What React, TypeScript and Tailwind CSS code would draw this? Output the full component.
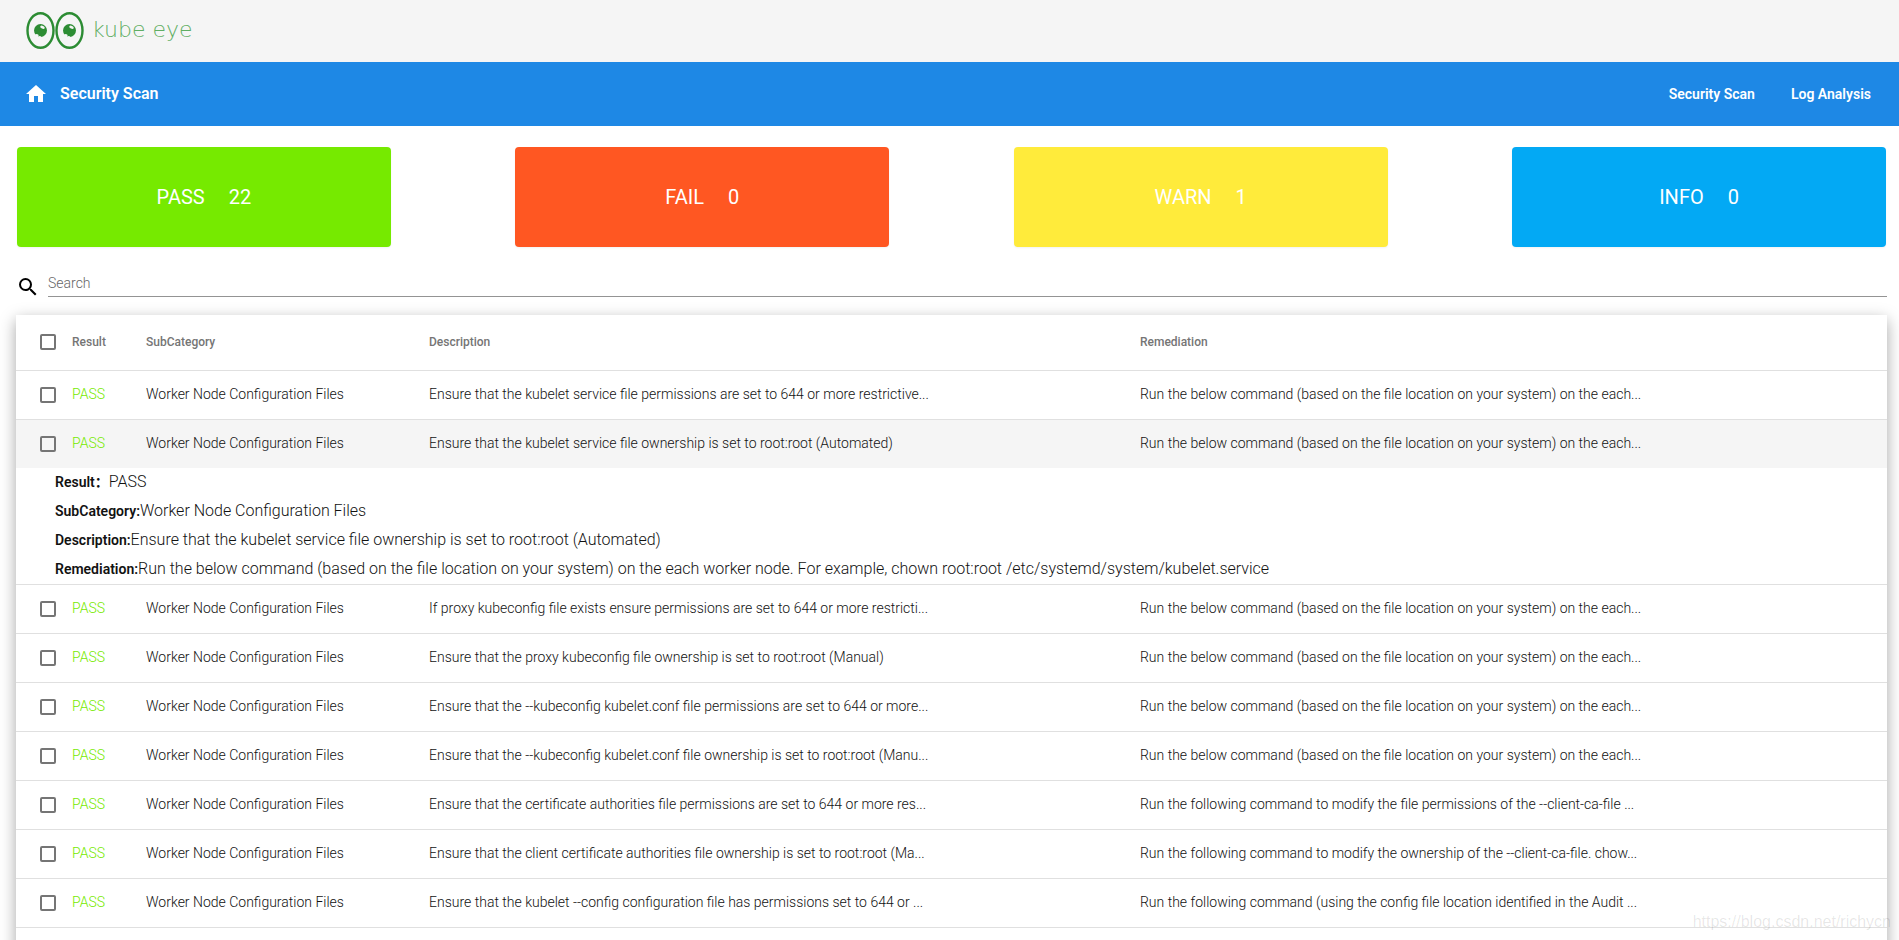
import { useState } from 'react'
import { MdHome, MdSearch } from 'react-icons/md'

type Item = {
  description: string
  remediation: string
  full?: { description: string; remediation: string }
}

const CATEGORY = 'Worker Node Configuration Files'
const BELOW = 'Run the below command (based on the file location on your system) on the each...'

const items: Item[] = [
  { description: 'Ensure that the kubelet service file permissions are set to 644 or more restrictive...', remediation: BELOW },
  {
    description: 'Ensure that the kubelet service file ownership is set to root:root (Automated)',
    remediation: BELOW,
    full: {
      description: 'Ensure that the kubelet service file ownership is set to root:root (Automated)',
      remediation:
        'Run the below command (based on the file location on your system) on the each worker node. For example, chown root:root /etc/systemd/system/kubelet.service',
    },
  },
  { description: 'If proxy kubeconfig file exists ensure permissions are set to 644 or more restricti...', remediation: BELOW },
  { description: 'Ensure that the proxy kubeconfig file ownership is set to root:root (Manual)', remediation: BELOW },
  { description: 'Ensure that the --kubeconfig kubelet.conf file permissions are set to 644 or more...', remediation: BELOW },
  { description: 'Ensure that the --kubeconfig kubelet.conf file ownership is set to root:root (Manu...', remediation: BELOW },
  {
    description: 'Ensure that the certificate authorities file permissions are set to 644 or more res...',
    remediation: 'Run the following command to modify the file permissions of the --client-ca-file ...',
  },
  {
    description: 'Ensure that the client certificate authorities file ownership is set to root:root (Ma...',
    remediation: 'Run the following command to modify the ownership of the --client-ca-file. chow...',
  },
  {
    description: 'Ensure that the kubelet --config configuration file has permissions set to 644 or ...',
    remediation: 'Run the following command (using the config file location identified in the Audit ...',
  },
]

const cards = [
  { label: 'PASS', count: 22, color: 'bg-[#76ea00]' },
  { label: 'FAIL', count: 0, color: 'bg-[#ff5722]' },
  { label: 'WARN', count: 1, color: 'bg-[#ffeb3b]' },
  { label: 'INFO', count: 0, color: 'bg-[#03a9f4]' },
]

const Eye = ({ x }: { x: number }) => (
  <g transform={`translate(${x} 0)`}>
    <ellipse cx="14" cy="18.5" rx="13" ry="17.3" fill="none" stroke="#2c8c33" strokeWidth="2.4" />
    <circle cx="14" cy="18.5" r="6.5" fill="#2c8c33" />
    <ellipse cx="16" cy="15.3" rx="2.4" ry="1.4" fill="#f5f5f5" transform="rotate(25 16 15.3)" />
    <circle cx="10.2" cy="24" r="2" fill="#f5f5f5" />
    <circle cx="13.4" cy="25.2" r="1.2" fill="#f5f5f5" />
  </g>
)

const Logo = () => (
  <a href="#" className="flex items-center gap-2">
    <svg width="58" height="38" viewBox="0 0 58 38" aria-hidden="true">
      <Eye x={0.5} />
      <Eye x={29.5} />
    </svg>
    <span className="pb-1 font-['DejaVu_Sans',sans-serif] text-[22px] font-extralight text-[#5fae63]">kube eye</span>
  </a>
)

const Checkbox = ({ label }: { label: string }) => (
  <input
    type="checkbox"
    aria-label={label}
    className="block size-4 appearance-none rounded-xs border-2 border-[#757575] checked:bg-[#1e88e5]"
  />
)

const Detail = ({ item }: { item: Item }) => (
  <div className="-mt-px pb-px pl-[39px] text-base leading-[29px] font-light">
    <p><b className="text-sm font-semibold">Result：</b>PASS</p>
    <p><b className="text-sm font-semibold">SubCategory:</b>{CATEGORY}</p>
    <p><b className="text-sm font-semibold">Description:</b>{item.full?.description}</p>
    <p><b className="text-sm font-semibold">Remediation:</b>{item.full?.remediation}</p>
  </div>
)

const Row = ({ item }: { item: Item }) => (
  <>
    <tr className={item.full ? 'h-[49px] bg-[#f5f5f5]' : 'h-[49px] border-b border-[#e0e0e0]'}>
      <td className="pl-6"><Checkbox label={item.description} /></td>
      <td className="pb-0.5 text-[#76ea00]">PASS</td>
      <td className="pb-0.5">{CATEGORY}</td>
      <td className="pb-0.5">{item.description}</td>
      <td className="pb-0.5">{item.remediation}</td>
    </tr>
    {item.full && (
      <tr className="border-b border-[#e0e0e0]">
        <td colSpan={5}><Detail item={item} /></td>
      </tr>
    )}
  </>
)

const App = () => {
  const [query, setQuery] = useState('')
  const rows = items.filter((i) => i.description.toLowerCase().includes(query.toLowerCase()))

  return (
    <div className="relative h-screen overflow-hidden bg-white font-[Roboto,'Noto_Sans_CJK_SC',sans-serif] text-[#121212]">
      <header className="flex h-[62px] items-center bg-[#f5f5f5] px-[26px]">
        <Logo />
      </header>

      <nav className="flex h-16 items-center justify-between bg-[#1e88e5] pr-7 pl-6 text-white">
        <a href="#" className="flex items-center gap-3 text-base font-semibold">
          <MdHome className="size-6" />
          Security Scan
        </a>
        <div className="flex gap-9 text-sm font-semibold">
          <a href="#">Security Scan</a>
          <a href="#">Log Analysis</a>
        </div>
      </nav>

      <main className="pt-[21px] pr-3 pl-4">
        <div className="flex justify-between px-px">
          {cards.map((card) => (
            <div
              key={card.label}
              className={`flex h-[100px] w-1/5 items-center justify-center gap-6 rounded-sm text-xl text-white shadow-xs ${card.color}`}
            >
              <span>{card.label}</span>
              <span>{card.count}</span>
            </div>
          ))}
        </div>

        <div className="mt-[23px] flex items-end">
          <MdSearch className="size-6 shrink-0 translate-y-0.5 text-black" />
          <input
            type="text"
            aria-label="Search"
            placeholder="Search"
            value={query}
            onChange={(e) => setQuery(e.target.value)}
            className="ml-2 h-[27px] flex-1 border-b border-[#949494] text-sm font-light outline-none placeholder:text-[#666666]"
          />
        </div>

        <div className="mt-[18px] min-h-screen bg-white shadow-[0_5px_15px_rgba(0,0,0,0.35)]">
          <table className="w-full table-fixed border-collapse text-left text-sm font-light whitespace-nowrap">
            <colgroup>
              <col className="w-14" />
              <col className="w-[74px]" />
              <col className="w-[283px]" />
              <col className="w-[38%]" />
              <col />
            </colgroup>
            <thead>
              <tr className="h-[55px] border-b border-[#e0e0e0] text-xs text-[#757575]">
                <th className="pl-6"><Checkbox label="Select all" /></th>
                <th className="font-medium">Result</th>
                <th className="font-medium">SubCategory</th>
                <th className="font-medium">Description</th>
                <th className="font-medium">Remediation</th>
              </tr>
            </thead>
            <tbody>
              {rows.map((item) => (
                <Row key={item.description} item={item} />
              ))}
            </tbody>
          </table>
        </div>
      </main>

      <div className="absolute right-2 bottom-1.5 font-['Liberation_Sans',sans-serif] text-base text-black/10">
        https://blog.csdn.net/richycn
      </div>
    </div>
  )
}

export default App
